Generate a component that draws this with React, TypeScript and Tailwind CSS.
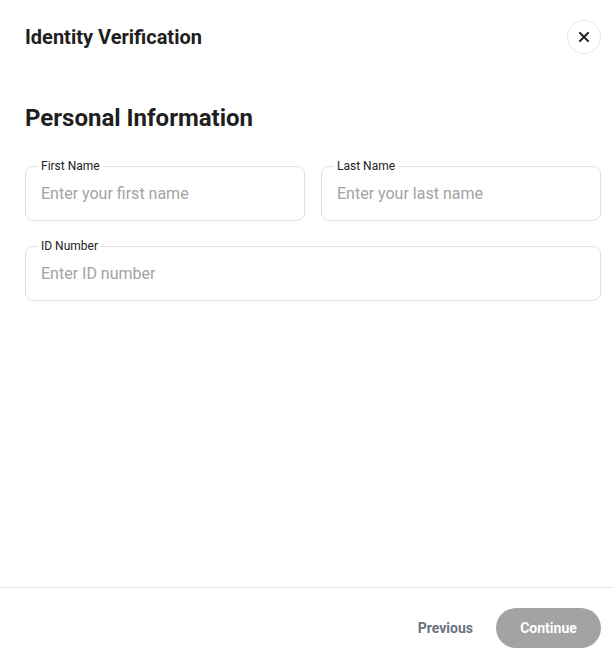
import React from "react";

function Field({ label, placeholder }: { label: string; placeholder: string }) {
  return (
    <fieldset className="min-w-0 flex-1 rounded-[8px] border border-[#e0e0e0] px-[12px] pb-[7px]">
      <legend className="px-[3px] text-[12px] leading-[14px] text-[#222222]">{label}</legend>
      <input
        type="text"
        placeholder={placeholder}
        className="h-[40px] w-full bg-transparent px-[3px] text-[16px] text-[#222222] outline-none placeholder:text-[#a3a3a3]"
      />
    </fieldset>
  );
}

export default function App() {
  return (
    <div
      className="flex h-[659px] w-full flex-col bg-white text-[#1f1f1f]"
      style={{ fontFamily: "Roboto, 'Noto Sans', sans-serif" }}
    >
      <header className="flex h-[74px] items-center justify-between pl-[25px] pr-[12px]">
        <h1 className="text-[20px] font-bold leading-[26px]">Identity Verification</h1>
        <button className="flex h-[34px] w-[34px] items-center justify-center rounded-full border border-[#e8e8e8] text-[#222222]">
          <svg width="14" height="14" viewBox="0 0 14 14" fill="none" stroke="currentColor" strokeWidth="2" strokeLinecap="round">
            <path d="M3 3l8 8M11 3l-8 8" />
          </svg>
        </button>
      </header>
      <main className="flex-1 pl-[25px] pr-[12px] pt-[28px]">
        <h2 className="text-[24px] font-bold leading-[32px]">Personal Information</h2>
        <div className="mt-[25px] flex flex-col gap-[18px]">
          <div className="flex gap-[16px]">
            <Field label="First Name" placeholder="Enter your first name" />
            <Field label="Last Name" placeholder="Enter your last name" />
          </div>
          <div className="flex">
            <Field label="ID Number" placeholder="Enter ID number" />
          </div>
        </div>
      </main>
      <footer className="flex items-start justify-end gap-[23px] border-t border-[#e8e8e8] pb-[11px] pr-[12px] pt-[20px]">
        <button className="h-[40px] text-[14px] font-bold text-[#6b7280]">Previous</button>
        <button className="h-[40px] w-[105px] rounded-full bg-[#a3a3a3] text-[14px] font-bold text-white">
          Continue
        </button>
      </footer>
    </div>
  );
}
